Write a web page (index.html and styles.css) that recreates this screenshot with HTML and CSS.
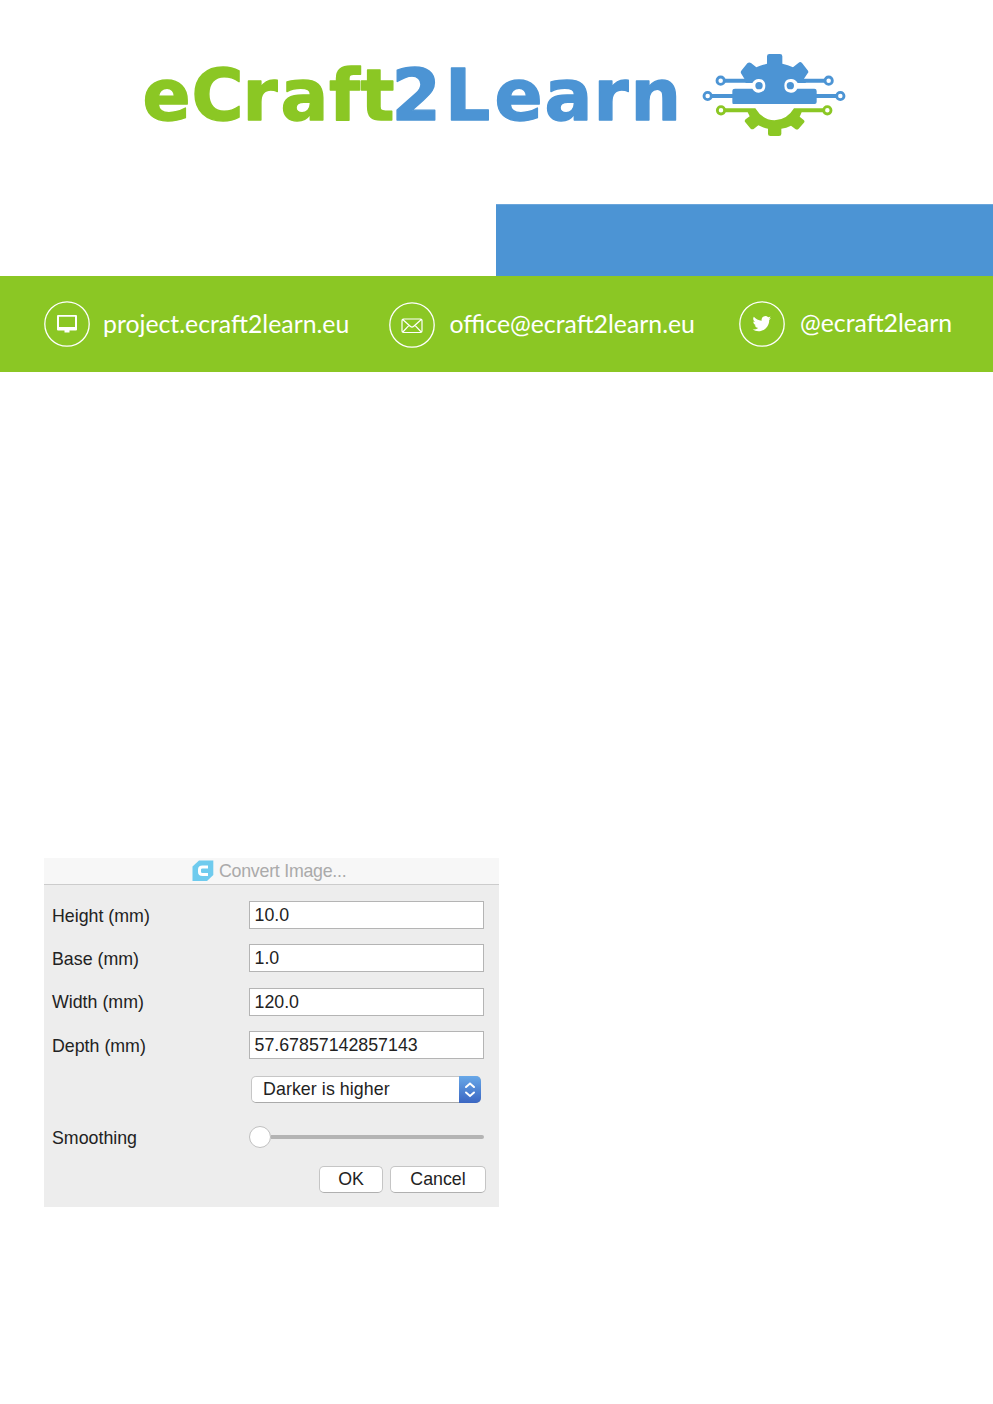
FILE: index.html
```html
<!DOCTYPE html>
<html lang="en">
<head>
<meta charset="utf-8">
<title>eCraft2Learn</title>
<link rel="stylesheet" href="styles.css">
</head>
<body>
<header class="brand">
  <svg class="wordmark" width="545" height="90" viewBox="140 50 545 90">
    <text class="green" y="120" x="142.5 191.5 242.5 280.5 329 360.5">eCraft</text>
    <text class="blue" y="120" x="391.5 445 494.5 544.5 593.5 630.5">2Learn</text>
  </svg>
  <svg class="gear" width="160" height="100" viewBox="0 0 480 300">
    <g fill="#4c94d4">
      <path d="M114 177Q112 177 112 171V137Q112 131 120 131H172Q180 144 192 143Q211 141 211 122Q211 103 192 102Q180 101 172 114H152L149 103L138 85Q136 80 140 76L157 55Q162 50 168 54L184 67Q199 60 216 56V34Q216 27 223 27H255Q262 27 262 34V56Q279 60 294 67L311 53Q316 49 321 54L338 76Q342 81 338 85L327 101L333 114H308Q300 101 287 102Q268 103 268 122Q268 141 287 143Q300 144 307 131H358Q365 131 365 138V171Q365 177 359 177Z"/>
      <circle cx="192" cy="122" r="11"/><circle cx="286" cy="122" r="11"/>
    </g>
    <g fill="none" stroke="#4c94d4" stroke-width="12">
      <path d="M89 107H168M309 107H389M49 153H114M363 153H424"/>
      <g stroke-width="8.5"><circle cx="77" cy="107" r="11"/><circle cx="401" cy="107" r="11"/><circle cx="38" cy="153" r="11"/><circle cx="436" cy="153" r="11"/></g>
    </g>
    <path fill="#8bc724" d="M90 190H181Q202 225 239 226Q276 225 297 190H385V202H320L314 215L326 225Q331 229 326 234L311 251Q306 256 301 252L288 242Q274 249 259 251V267Q259 273 252 273H226Q219 273 219 267V251Q204 248 190 241L177 251Q172 255 167 251L151 232Q147 227 152 223L164 214L158 202H90Z"/>
    <g fill="none" stroke="#8bc724" stroke-width="8.5"><circle cx="78" cy="196" r="11"/><circle cx="397" cy="196" r="11"/></g>
  </svg>
</header>
<div class="accent"></div>
<section class="contacts">
  <div class="contact site">
    <svg width="46" height="46" viewBox="0 0 46 46"><circle class="ring" cx="23" cy="23" r="22.2"/><path fill="#fff" fill-rule="evenodd" d="M14 14H32Q33 14 33 15V28.5Q33 29.5 32 29.5H25.5V31.5H20.5V29.5H14Q13 29.5 13 28.5V15Q13 14 14 14ZM15 15.7V26H31V15.7Z"/></svg>
    <span>project.ecraft2learn.eu</span>
  </div>
  <div class="contact mail">
    <svg width="46" height="46" viewBox="0 0 46 46"><circle class="ring" cx="23" cy="23" r="22.2"/><path class="line" d="M14.5 17H31.5Q33 17 33 18.5V29Q33 30.5 31.5 30.5H14.5Q13 30.5 13 29V18.5Q13 17 14.5 17ZM13.7 17.5L21.5 24.5Q23 25.8 24.5 24.5L32.3 17.5M13.8 30L20 23.4M32.2 30L26 23.4"/></svg>
    <span>office@ecraft2learn.eu</span>
  </div>
  <div class="contact social">
    <svg width="46" height="46" viewBox="0 0 46 46"><circle class="ring" cx="23" cy="23" r="22.2"/><path fill="#fff" transform="translate(13.6 13.4) scale(.77)" d="M23.95 4.57a10 10 0 0 1-2.82.77 4.96 4.96 0 0 0 2.16-2.72c-.95.55-2 .95-3.13 1.18a4.92 4.92 0 0 0-8.38 4.48C7.69 8.1 4.07 6.13 1.64 3.16a4.92 4.92 0 0 0 1.52 6.57 4.9 4.9 0 0 1-2.23-.61v.06a4.92 4.92 0 0 0 3.95 4.83 5 5 0 0 1-2.21.08 4.94 4.94 0 0 0 4.6 3.42A9.87 9.87 0 0 1 0 19.54a13.99 13.99 0 0 0 7.55 2.21c9.05 0 14-7.5 14-13.98 0-.21 0-.42-.02-.63a9.94 9.94 0 0 0 2.46-2.55z"/></svg>
    <span>@ecraft2learn</span>
  </div>
</section>
<main class="content">
  <form class="dialog">
    <div class="titlebar">
      <svg width="22" height="22" viewBox="0 0 22 22"><path fill="#6fcbee" d="M7 .5H21.3V15L15 21H.5V6.5Z"/><path fill="none" stroke="#fff" stroke-width="3" d="M16 7H10.5Q7.5 7 7.5 9.5V12Q7.5 14.5 10.5 14.5H16"/></svg>
      <span>Convert Image...</span>
    </div>
    <div class="fields">
      <div class="row"><label>Height (mm)</label><div class="field">10.0</div></div>
      <div class="row"><label>Base (mm)</label><div class="field">1.0</div></div>
      <div class="row"><label>Width (mm)</label><div class="field">120.0</div></div>
      <div class="row"><label>Depth (mm)</label><div class="field">57.67857142857143</div></div>
      <div class="row choice"><div class="select"><span>Darker is higher</span><svg width="22" height="26" viewBox="0 0 22 26"><path d="M7 10.5L11 7L15 10.5M7 16L11 19.5L15 16"/></svg></div></div>
      <div class="row smoothing"><label>Smoothing</label><div class="slider"><i class="knob"></i><i class="track"></i></div></div>
      <div class="actions"><div class="button ok">OK</div><div class="button cancel">Cancel</div></div>
    </div>
  </form>
</main>
</body>
</html>
```
FILE: styles.css
```css
* { box-sizing: border-box; }
body { margin: 0; background: #fff; font-family: "Liberation Sans", Arial, sans-serif; }
svg { display: block; flex: none; }

.brand { height: 204px; padding: 45px 0 0 140px; display: flex; align-items: flex-start; gap: 10px; }
.wordmark { margin-top: 5px; }
.wordmark text { font: bold 71px "DejaVu Sans", sans-serif; stroke-width: 1.4; stroke-linejoin: round; }
.green { fill: #8bc724; stroke: #8bc724; }
.blue { fill: #4c94d4; stroke: #4c94d4; }

.accent { height: 72px; margin-left: 496px; background: #4c94d4; border-top: 1px solid #6ba6db; }
.contacts { height: 96px; display: flex; background: #8bc724; color: #fff; padding: 25px 0 0 44px; }
.contact { display: flex; height: 46px; font: 24.8px/46px Lato, sans-serif; white-space: nowrap; }
.contact span { margin-left: 13px; }
.site { width: 344.5px; }
.mail { width: 350px; margin-top: 1px; }
.contact.mail span { margin-left: 15px; margin-top: -1px; }
.contact.social span { margin-left: 15.5px; margin-top: -1px; }
.ring { fill: none; stroke: #fff; stroke-width: 1.3; }
.line { fill: none; stroke: #fff; stroke-width: 1.2; }

.content { padding: 486px 0 0 44px; }
.dialog { width: 455px; height: 349px; background: #ededed; color: #222; font-size: 17.8px; }
.titlebar { height: 27px; display: flex; align-items: center; gap: 5px; padding-left: 148px; background: #f7f7f7; border-bottom: 1px solid #ccc; color: #aaa; white-space: nowrap; }
.titlebar span { padding-top: 1px; letter-spacing: -.25px; }
.fields { padding: 8.4px 13px 0 8px; }
.row { height: 43.4px; display: flex; align-items: center; }
.row label { width: 196.5px; padding-top: 2px; }
.field { width: 235.5px; height: 28px; padding-left: 5px; line-height: 27px; background: #fff; border: 1px solid #b4b4b4; }
.choice { height: 46px; padding-left: 199px; }
.select { width: 230px; height: 27px; display: flex; justify-content: space-between; background: #fff; border: 1px solid #c6c6c6; border-bottom-color: #aaa; border-radius: 5px; line-height: 24px; }
.select span { padding-left: 11px; letter-spacing: .08px; }
.select svg { margin: -1px; height: 27px; border-radius: 0 5px 5px 0; background: linear-gradient(#68a8e8, #3b66c2); }
.select path { fill: none; stroke: #fff; stroke-width: 2; stroke-linecap: round; }
.smoothing { height: 49px; }
.slider { display: flex; align-items: center; width: 235px; }
.knob { width: 22px; height: 22px; border-radius: 50%; background: #fff; border: 1px solid #c0c0c0; }
.track { flex: 1; height: 4px; border-radius: 0 2px 2px 0; background: #b4b4b4; }
.actions { height: 35px; display: flex; align-items: center; gap: 7px; padding-left: 267px; }
.button { flex: none; height: 27px; text-align: center; line-height: 25px; background: #fff; border: 1px solid #c5c5c5; border-bottom-color: #b0b0b0; border-radius: 5px; }
.ok { width: 64px; }
.cancel { width: 96px; }
```
